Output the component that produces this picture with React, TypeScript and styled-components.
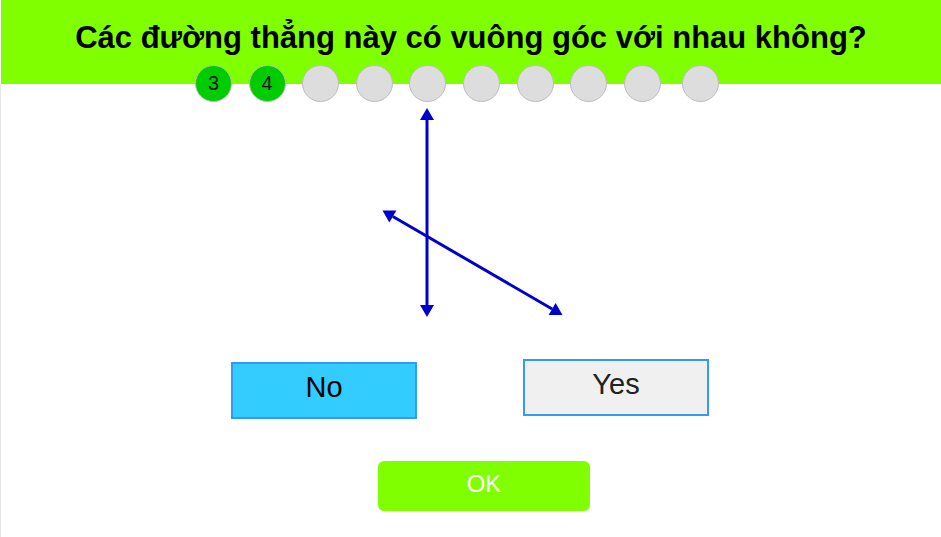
import React from "react";
import styled, { createGlobalStyle } from "styled-components";

const GlobalStyle = createGlobalStyle`
  html, body { margin: 0; padding: 0; background: #ffffff; }
  body { font-family: "Liberation Sans", Arial, sans-serif; }
  * { box-sizing: border-box; }
`;

const Page = styled.div`
  width: 941px;
  height: 537px;
  display: flex;
  flex-direction: column;
  overflow: hidden;
`;

const Header = styled.header`
  height: 84px;
  margin-left: 1px;
  background: #80ff00;
  display: flex;
  justify-content: center;
  padding-top: 18px;
`;

const Title = styled.h1`
  margin: 0;
  font-family: "Liberation Sans", Arial, sans-serif;
  font-weight: bold;
  font-size: 31px;
  line-height: 40px;
  color: #000;
`;

const Body = styled.main`
  flex: 1;
  border-left: 1px solid #e4e4e4;
  display: flex;
  flex-direction: column;
`;

const Progress = styled.div`
  display: flex;
  margin-top: -19px;
  padding-left: 194px;
  gap: 16.6px;
`;

const Dot = styled.div<{ $done?: boolean; $last?: boolean }>`
  width: 37px;
  height: 37px;
  border-radius: 50%;
  border: 1px solid #bdbdbd;
  background: ${(p) => (p.$done ? "#00cc00" : "#dddddd")};
  margin-left: ${(p) => (p.$last ? "5px" : "0")};
  display: flex;
  align-items: center;
  justify-content: center;
  font-size: 20px;
  color: #111;
`;

const FigureRow = styled.div`
  display: flex;
  padding-left: 368px;
  margin-top: 3px;
`;

const Choices = styled.div`
  display: flex;
  align-items: flex-start;
  padding-left: 230px;
  gap: 106px;
  margin-top: 34px;
`;

const Choice = styled.button<{ $selected?: boolean; $drop?: number }>`
  width: 186px;
  height: 57px;
  margin-top: ${(p) => p.$drop ?? 0}px;
  border: 2px solid #3399ff;
  background: ${(p) => (p.$selected ? "#33ccff" : "#f0f0f0")};
  font-family: "Liberation Sans", Arial, sans-serif;
  font-size: 29px;
  color: ${(p) => (p.$selected ? "#000" : "#222")};
  padding: 0 0 6px 0;
  cursor: pointer;
`;

const OkRow = styled.div`
  display: flex;
  padding-left: 377px;
  margin-top: 42px;
`;

const OkButton = styled.button`
  width: 212px;
  height: 50px;
  border: none;
  border-radius: 6px;
  background: #80ff00;
  color: #ffffff;
  font-family: "Liberation Sans", Arial, sans-serif;
  font-size: 24px;
  padding: 0 0 5px 0;
  cursor: pointer;
`;

type P = [number, number];

function arrowLine(a: P, b: P, len = 12, half = 7) {
  const dx = b[0] - a[0];
  const dy = b[1] - a[1];
  const L = Math.hypot(dx, dy);
  const ux = dx / L;
  const uy = dy / L;
  const nx = -uy;
  const ny = ux;
  const ba: P = [a[0] + ux * len, a[1] + uy * len];
  const bb: P = [b[0] - ux * len, b[1] - uy * len];
  const head = (t: P, c: P) =>
    `${t[0]},${t[1]} ${c[0] + nx * half},${c[1] + ny * half} ${c[0] - nx * half},${c[1] - ny * half}`;
  return { ba, bb, h1: head(a, ba), h2: head(b, bb) };
}

const Line: React.FC<{ a: P; b: P }> = ({ a, b }) => {
  const { ba, bb, h1, h2 } = arrowLine(a, b);
  return (
    <g>
      <line x1={ba[0]} y1={ba[1]} x2={bb[0]} y2={bb[1]} stroke="#0000cc" strokeWidth={3} />
      <polygon points={h1} fill="#0000cc" />
      <polygon points={h2} fill="#0000cc" />
    </g>
  );
};

export default function App() {
  const dots = Array.from({ length: 10 }, (_, i) => i);
  return (
    <Page>
      <GlobalStyle />
      <Header>
        <Title>Các đường thẳng này có vuông góc với nhau không?</Title>
      </Header>
      <Body>
        <Progress>
          {dots.map((i) => (
            <Dot key={i} $done={i < 2} $last={i === 9}>
              {i === 0 ? "3" : i === 1 ? "4" : ""}
            </Dot>
          ))}
        </Progress>
        <FigureRow>
          <svg width={210} height={220} viewBox="0 0 210 220">
            <Line a={[58, 3]} b={[58, 212]} />
            <Line a={[13.5, 105.5]} b={[193.5, 210]} />
          </svg>
        </FigureRow>
        <Choices>
          <Choice $selected $drop={3}>No</Choice>
          <Choice>Yes</Choice>
        </Choices>
        <OkRow>
          <OkButton>OK</OkButton>
        </OkRow>
      </Body>
    </Page>
  );
}
